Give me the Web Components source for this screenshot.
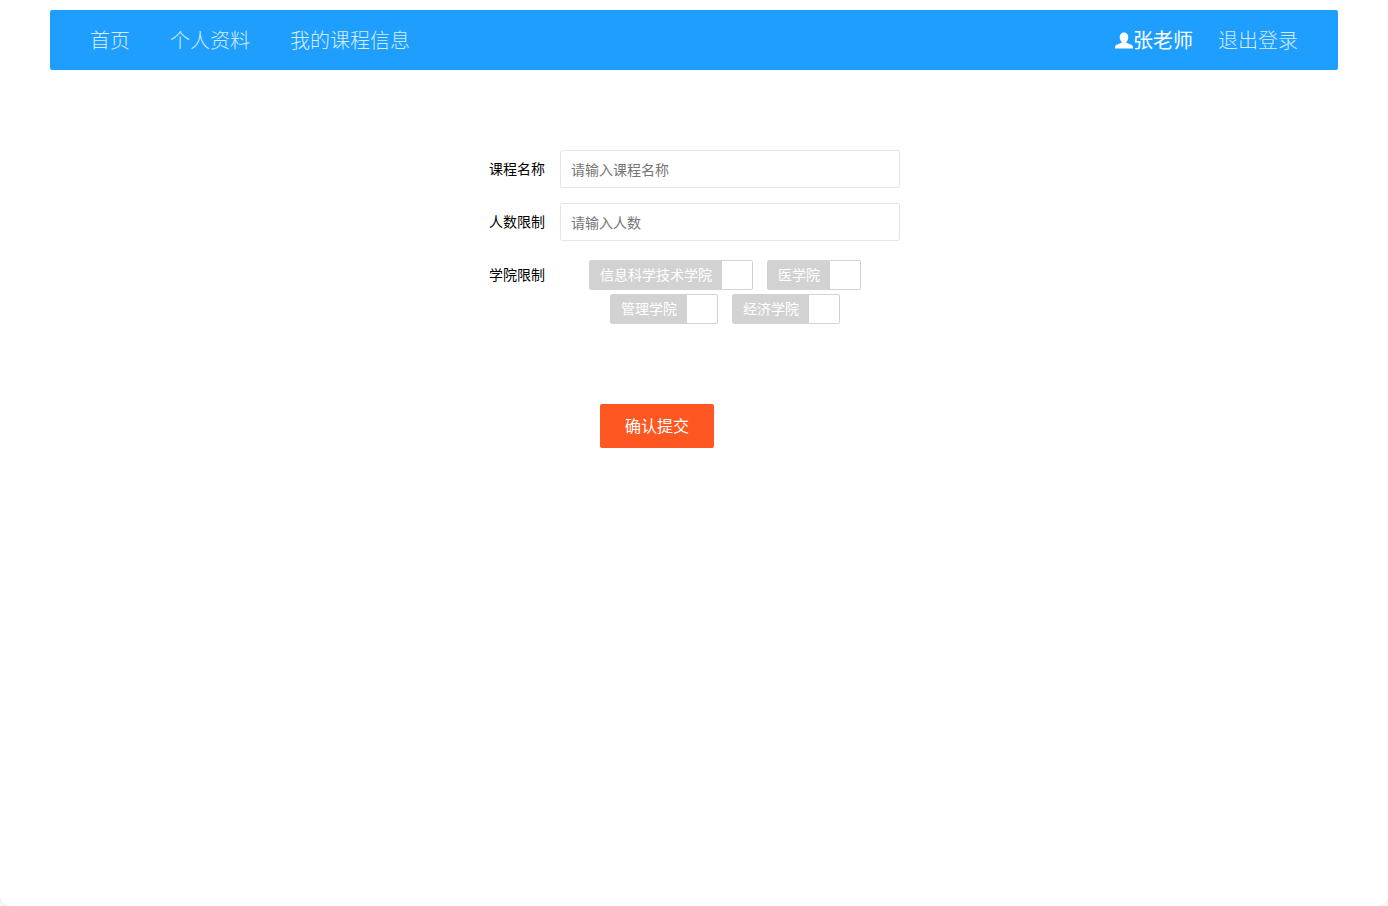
<!DOCTYPE html>
<html lang="zh">
<head>
<meta charset="utf-8">
<title>添加课程</title>
<style>
    html, body { margin: 0; background: #fff; }
    body {
        font: 14px "Noto Sans CJK SC", "Liberation Sans", sans-serif;
        color: #000;
    }
</style>
</head>
<body>
<app-page>
    <top-nav>
        <nav-link>首页</nav-link>
        <nav-link>个人资料</nav-link>
        <nav-link>我的课程信息</nav-link>
        <nav-user slot="right">张老师</nav-user>
        <nav-link slot="right">退出登录</nav-link>
    </top-nav>
    <course-form>
        <form-row label="课程名称"><text-field placeholder="请输入课程名称"></text-field></form-row>
        <form-row label="人数限制"><text-field placeholder="请输入人数"></text-field></form-row>
        <form-row label="学院限制">
            <check-group>
                <check-tag>信息科学技术学院</check-tag>
                <check-tag>医学院</check-tag>
                <check-tag>管理学院</check-tag>
                <check-tag>经济学院</check-tag>
            </check-group>
        </form-row>
        <submit-button slot="actions">确认提交</submit-button>
    </course-form>
    <window-corners></window-corners>
</app-page>
<script>
(function () {
    function define(name, css, html) {
        customElements.define(name, class extends HTMLElement {
            constructor() {
                super();
                let root = this.attachShadow({ mode: "open" });
                root.innerHTML = "<style>" + css + "</style>" + html;
            }
        });
    }

    define("app-page", `
        :host { display: block; padding: 10px 50px 0; min-height: 896px; }
    `, `<slot></slot>`);

    define("top-nav", `
        :host {
            display: flex;
            justify-content: space-between;
            height: 60px;
            padding: 0 20px;
            background: #1E9FFF;
            border-radius: 2px;
        }
        div { display: flex; }
    `, `<div><slot></slot></div><div><slot name="right"></slot></div>`);

    define("nav-link", `
        :host {
            display: block;
            padding: 0 20px;
            font-size: 20px;
            font-weight: 300;
            line-height: 60px;
            color: rgba(255, 255, 255, .82);
        }
    `, `<slot></slot>`);

    define("nav-user", `
        :host {
            display: flex;
            align-items: center;
            padding: 0 5px 0 20px;
            font-size: 20px;
            line-height: 60px;
            color: #fff;
        }
        svg { width: 18px; height: 17px; fill: #fff; display: block; }
    `, `<svg viewBox="0 0 18 17"><path d="M9 .5C11.800 .5 13.300 2.600 13.300 5.300C13.300 7.300 12.400 9 11.400 10C11.100 10.400 11.300 10.900 11.800 11.100C14.200 12.100 17.500 12.600 17.800 14.600L18 16.500H0L.2 14.600C.5 12.600 3.800 12.100 6.200 11.100C6.700 10.900 6.900 10.400 6.600 10C5.600 9 4.700 7.300 4.700 5.300C4.700 2.600 6.200 .5 9 .5Z"/></svg><slot></slot>`);

    define("course-form", `
        :host { display: block; width: 450px; margin: 80px 0 0 400px; }
        .actions { margin: 80px 0 0 150px; }
    `, `<slot></slot><div class="actions"><slot name="actions"></slot></div>`);

    define("form-row", `
        :host { display: flex; margin-bottom: 15px; }
        label {
            flex: none;
            box-sizing: border-box;
            width: 110px;
            padding: 8px 15px 10px;
            line-height: 20px;
            text-align: right;
            font-size: 14px;
        }
        div { flex: 1; min-width: 0; }
    `, `<label></label><div><slot></slot></div>`);

    define("text-field", `
        :host { display: block; }
        input {
            display: block;
            box-sizing: border-box;
            width: 100%;
            height: 38px;
            padding: 0 10px;
            border: 1px solid #e6e6e6;
            border-radius: 2px;
            background: #fff;
            font: inherit;
            outline: 0;
        }
        input::placeholder { color: #757575; opacity: 1; }
    `, `<input type="text" autocomplete="off">`);

    define("check-group", `
        :host {
            display: flex;
            flex-wrap: wrap;
            justify-content: center;
            gap: 4px;
            padding-top: 4px;
        }
    `, `<slot></slot>`);

    define("check-tag", `
        :host {
            display: block;
            margin-right: 10px;
            box-sizing: border-box;
            height: 30px;
            padding-right: 30px;
            border: 1px solid #d2d2d2;
            border-radius: 2px;
            background: #fff;
            font-size: 14px;
            line-height: 26px;
            color: #fff;
        }
        span {
            display: block;
            height: 100%;
            padding: 0 10px;
            background: #d2d2d2;
        }
    `, `<span><slot></slot></span>`);

    define("submit-button", `
        :host {
            display: inline-block;
            height: 44px;
            padding: 0 25px;
            background: #FF5722;
            border-radius: 2px;
            color: #fff;
            font-size: 16px;
            line-height: 42px;
        }
    `, `<slot></slot>`);

    // faint rounded corners of the browser window, they lie over the page
    define("window-corners", `
        :host { display: block; position: fixed; inset: 0; pointer-events: none; }
        i { position: absolute; bottom: 0; width: 9px; height: 9px; }
        .l { left: 0; background: radial-gradient(circle at 100% 0, transparent 8px, #f2f2f2 9px, #fafafa 12px); }
        .r { right: 0; background: radial-gradient(circle at 0 0, transparent 8px, #f2f2f2 9px, #fafafa 12px); }
    `, `<i class="l"></i><i class="r"></i>`);

    // labels and placeholders come in as attributes
    document.querySelectorAll("form-row").forEach(function (row) {
        row.shadowRoot.querySelector("label").textContent = row.getAttribute("label");
    });
    document.querySelectorAll("text-field").forEach(function (field) {
        field.shadowRoot.querySelector("input").placeholder = field.getAttribute("placeholder");
    });
})();
</script>
</body>
</html>
